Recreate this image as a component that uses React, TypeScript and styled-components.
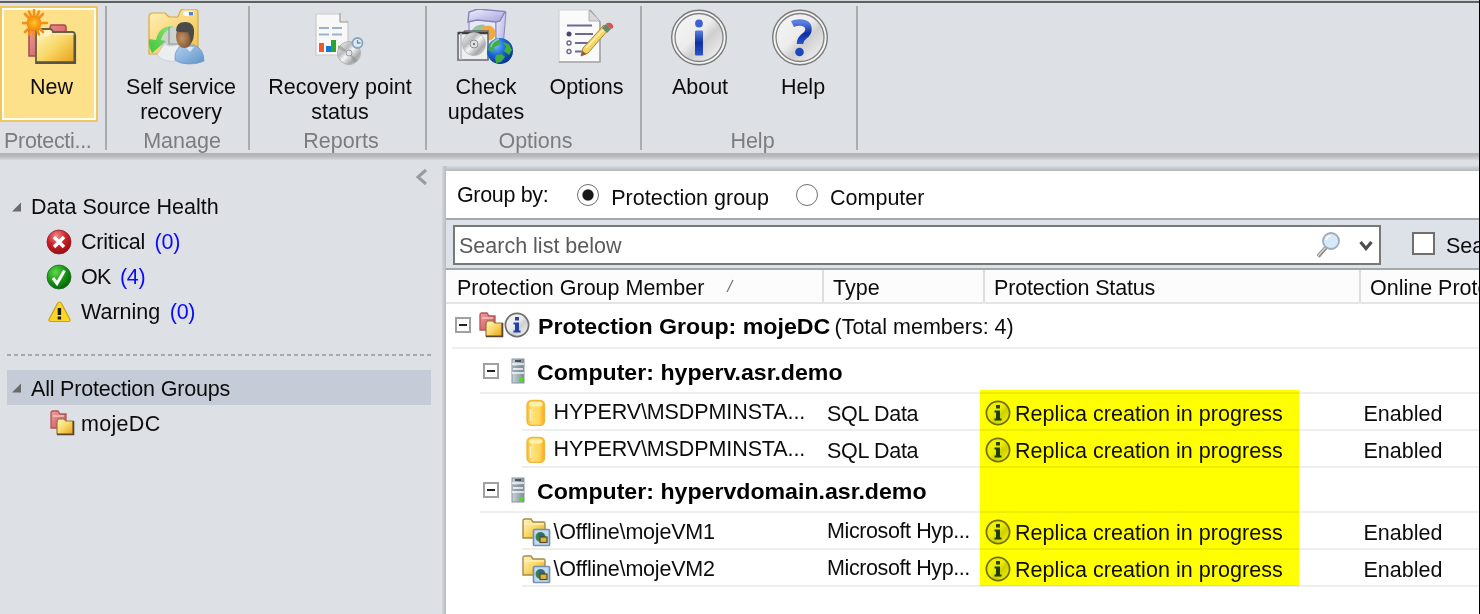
import React from "react";
import styled, { createGlobalStyle } from "styled-components";

const Global = createGlobalStyle`
  * { box-sizing: border-box; }
  body { margin: 0; background: #dde1e6; overflow: hidden; }
  svg { display: block; flex: none; }
`;

const Window = styled.div`
  width: 1480px;
  height: 614px;
  overflow: hidden;
  display: flex;
  flex-direction: column;
  background: #dde1e6;
  border-right: 1px solid #000;
  font-family: "Liberation Sans", Arial, sans-serif;
  font-size: 21.5px;
  line-height: 25px;
  color: #0c0c0c;
  white-space: nowrap;
`;

const Label = styled.span<{ $ls?: number; $color?: string }>`
  letter-spacing: ${(p) => p.$ls ?? 0}px;
  color: ${(p) => p.$color ?? "inherit"};
`;

/* ---------- ribbon ---------- */

const Ribbon = styled.div`
  height: 160px;
  flex: none;
  display: flex;
  border-top: 1px solid #d3d6da;
  background: linear-gradient(#5d615f 0 2px, #dde1e6 2px 152px, #b0b1b2 152px, #b6b8ba 155px, #d5d9dd 159px);
  background-origin: padding-box;
  padding-top: 5px;
`;

const RibbonGroup = styled.div<{ $width: number }>`
  width: ${(p) => p.$width}px;
  height: 144px;
  border-right: 2px solid #a9abad;
  display: flex;
  flex-direction: column;
`;

const RibbonButtons = styled.div<{ $pad?: number }>`
  height: 117px;
  display: flex;
  padding-left: ${(p) => p.$pad ?? 0}px;
`;

const RibbonButton = styled.div<{ $width: number; $active?: boolean; $nudge?: number }>`
  width: ${(p) => p.$width}px;
  height: 116px;
  padding-top: 3px;
  padding-left: ${(p) => p.$nudge ?? 0}px;
  display: flex;
  flex-direction: column;
  align-items: center;
  text-align: center;
  background: ${(p) => (p.$active ? "#fce08a" : "transparent")};
  box-shadow: ${(p) => (p.$active ? "inset 0 0 0 2px #f0c75e, inset 0 0 0 4px #fffdf3" : "none")};
`;

const IconSlot = styled.div<{ $pull?: number }>`
  height: 66px;
  width: 60px;
  margin-right: ${(p) => p.$pull ?? 0}px;
  flex: none;
`;

const GroupLabel = styled.div<{ $nudge?: number }>`
  margin-top: 7px;
  padding-left: ${(p) => p.$nudge ?? 0}px;
  text-align: center;
  color: #7b7c7e;
`;

const LeftGroupLabel = styled(GroupLabel)`
  padding-left: 4px;
  text-align: left;
  letter-spacing: -0.3px;
`;

/* ---------- sidebar ---------- */

const Content = styled.div`
  flex: 1;
  display: flex;
  min-height: 0;
`;

const Sidebar = styled.div`
  width: 442px;
  flex: none;
  padding: 8px 11px 0 7px;
`;

const CollapseRow = styled.div`
  height: 22px;
  display: flex;
  justify-content: flex-end;
  padding-right: 2px;
`;

const TreeRow = styled.div<{ $selected?: boolean; $drop?: number }>`
  height: 35px;
  display: flex;
  align-items: center;
  padding-left: 5px;
  padding-top: ${(p) => p.$drop ?? 0}px;
  background: ${(p) => (p.$selected ? "#c5ccd8" : "transparent")};
`;

const TreeArrow = styled.div`
  width: 19px;
  padding-bottom: 2px;
`;

const TreeLeaf = styled(TreeRow)`
  padding-left: 39px;
`;

const LeafIcon = styled.div<{ $inset?: number }>`
  width: 35px;
  flex: none;
  padding: 0 0 2px ${(p) => p.$inset ?? 0}px;
`;

const Count = styled.span`
  margin-left: 9.5px;
  letter-spacing: -0.3px;
  color: #0a0aff;
`;

const Divider = styled.div`
  margin: 24px 0 14px;
  height: 2px;
  background: repeating-linear-gradient(90deg, #a8abae 0 4px, transparent 4px 7px);
`;

/* ---------- main pane ---------- */

const PaneEdge = styled.div`
  width: 4px;
  flex: none;
  margin-top: 6px;
  background: linear-gradient(90deg, #d3d7dc, #b6bbc1);
`;

const Main = styled.div`
  flex: 1;
  min-width: 0;
  margin-top: 6px;
  background: linear-gradient(#d3d7dc, #b4b9bd 5px, #fff 5px);
  padding-top: 5px;
  display: flex;
  flex-direction: column;
  overflow: hidden;
`;

const GroupBar = styled.div`
  height: 47px;
  flex: none;
  display: flex;
  padding: 12px 0 0 11px;
`;

const RadioOption = styled.div<{ $left: number }>`
  display: flex;
  margin-left: ${(p) => p.$left}px;
`;

const RadioDot = styled.span<{ $checked?: boolean }>`
  width: 22px;
  height: 22px;
  margin: 1px 12px 0 0;
  border-radius: 50%;
  border: 1.8px solid #707070;
  background: ${(p) => (p.$checked ? "radial-gradient(circle, #171717 0 5px, #fff 6.2px)" : "#fff")};
`;

const RadioText = styled.span`
  padding-top: 3px;
`;

const SearchBar = styled.div`
  height: 52px;
  flex: none;
  border-top: 2px solid #a5a7aa;
  border-bottom: 2px solid #a5a7aa;
  background: #dde1e8;
  display: flex;
  align-items: flex-start;
  padding: 5px 0 0 7px;
`;

const SearchInput = styled.div`
  width: 928px;
  height: 40px;
  flex: none;
  border: 2px solid #787878;
  background: #fff;
  display: flex;
  align-items: flex-start;
  padding: 6px 6px 0 4px;
  color: #5a5a5a;
`;

const SearchText = styled.span`
  flex: 1;
  padding-top: 1px;
`;

const CheckBox = styled.span`
  width: 23px;
  height: 23px;
  flex: none;
  margin: 7px 11px 0 31px;
  border: 2px solid #6f6f6f;
  background: #fff;
`;

const CheckText = styled.span`
  margin-top: 9px;
`;

const HeaderRow = styled.div`
  height: 34px;
  flex: none;
  display: flex;
  background: #fcfcfc;
  border-bottom: 2px solid #e5e5e5;
`;

const HeaderCell = styled.div<{ $width: number; $pad: number; $ls?: number }>`
  width: ${(p) => p.$width}px;
  flex: none;
  padding: 6px 0 0 ${(p) => p.$pad}px;
  letter-spacing: ${(p) => p.$ls ?? 0}px;
  border-right: 2px solid #dedede;
  display: flex;
`;

const SortMark = styled.svg`
  margin: 3px 0 0 22px;
`;

const Body = styled.div`
  position: relative;
  flex: 1;
`;

const Highlight = styled.div`
  position: absolute;
  left: 534px;
  top: 86px;
  width: 319px;
  height: 196px;
  background: #ffff00;
  mix-blend-mode: multiply;
`;

const Row = styled.div<{ $indent: number; $height: number }>`
  margin-left: ${(p) => p.$indent}px;
  height: ${(p) => p.$height}px;
  border-bottom: 2px solid #eeeeee;
  display: flex;
`;

const GroupCell = styled.div<{ $gap: number; $top: number }>`
  display: flex;
  padding-left: 3px;
  padding-top: ${(p) => p.$top}px;
  gap: ${(p) => p.$gap}px;
`;

const MinusBox = styled.span`
  width: 16px;
  height: 16px;
  margin-top: 5px;
  flex: none;
  border: 2px solid #a0a0a0;
  background: linear-gradient(#222, #222) center / 8px 2px no-repeat #fff;
`;

const IconPair = styled.div`
  display: flex;
`;

const GroupTitle = styled.div`
  display: flex;
  padding-top: 3px;
`;

const Bold = styled.span<{ $width: number }>`
  width: ${(p) => p.$width}px;
  font-weight: bold;
  color: #000;
`;

const Stretch = styled.span<{ $x: number }>`
  display: inline-block;
  transform: scaleX(${(p) => p.$x});
  transform-origin: left;
`;

const MemberCell = styled.div<{ $top: number }>`
  width: 302px;
  flex: none;
  display: flex;
  padding-top: ${(p) => p.$top}px;
`;

const MemberIcon = styled.div`
  width: 31.5px;
  height: 30px;
  flex: none;
`;

const Cell = styled.div<{ $width: number; $pad: number; $top: number }>`
  width: ${(p) => p.$width}px;
  flex: none;
  display: flex;
  padding: ${(p) => p.$top}px 0 0 ${(p) => p.$pad}px;
`;

const StatusIcon = styled.div`
  width: 30px;
  margin-top: -2px;
`;

/* ---------- drawings ---------- */

const Defs = () => (
  <svg width="0" height="0" style={{ position: "absolute" }}>
    <defs>
      <linearGradient id="gold" x1="0" y1="0" x2="1" y2="1">
        <stop offset="0" stopColor="#fff6c4" />
        <stop offset=".5" stopColor="#f9d868" />
        <stop offset="1" stopColor="#e69f12" />
      </linearGradient>
      <linearGradient id="paleGold" x1="0" y1="0" x2="1" y2="1">
        <stop offset="0" stopColor="#fff0b8" />
        <stop offset="1" stopColor="#f2bf45" />
      </linearGradient>
      <linearGradient id="rose" x1="0" y1="0" x2="1" y2="1">
        <stop offset="0" stopColor="#f0a0a0" />
        <stop offset="1" stopColor="#c9494f" />
      </linearGradient>
      <linearGradient id="silver" x1="0" y1="0" x2="1" y2="1">
        <stop offset="0" stopColor="#f6f6f6" />
        <stop offset=".45" stopColor="#ececec" />
        <stop offset=".6" stopColor="#cfcfcf" />
        <stop offset="1" stopColor="#fafafa" />
      </linearGradient>
      <linearGradient id="blue" x1="0" y1="0" x2="0" y2="1">
        <stop offset="0" stopColor="#5a7fe0" />
        <stop offset=".5" stopColor="#0e2fa0" />
        <stop offset="1" stopColor="#2c55cf" />
      </linearGradient>
      <radialGradient id="sun">
        <stop offset="0" stopColor="#ffc933" />
        <stop offset=".6" stopColor="#fb9c12" />
        <stop offset="1" stopColor="#f58a12" />
      </radialGradient>
      <radialGradient id="red" cx=".4" cy=".25" r=".8">
        <stop offset="0" stopColor="#f08a8a" />
        <stop offset=".5" stopColor="#cc2027" />
        <stop offset="1" stopColor="#8f0d12" />
      </radialGradient>
      <radialGradient id="green" cx=".35" cy=".3" r=".8">
        <stop offset="0" stopColor="#5fd84a" />
        <stop offset=".55" stopColor="#149312" />
        <stop offset="1" stopColor="#04590a" />
      </radialGradient>
      <radialGradient id="globe" cx=".35" cy=".3" r=".8">
        <stop offset="0" stopColor="#6fb8ff" />
        <stop offset=".5" stopColor="#1560cf" />
        <stop offset="1" stopColor="#062a80" />
      </radialGradient>
      <linearGradient id="arrow" x1="1" y1="0" x2="0" y2="1">
        <stop offset="0" stopColor="#8be47a" />
        <stop offset="1" stopColor="#3fc53a" />
      </linearGradient>
      <linearGradient id="shirt" x1="0" y1="0" x2="1" y2="1">
        <stop offset="0" stopColor="#b5d2ef" />
        <stop offset="1" stopColor="#5e92c8" />
      </linearGradient>
      <radialGradient id="face" cx=".35" cy=".6" r=".7">
        <stop offset="0" stopColor="#c39062" />
        <stop offset="1" stopColor="#6b4326" />
      </radialGradient>
      <linearGradient id="disc" x1="0" y1="0" x2="1" y2="1">
        <stop offset="0" stopColor="#fff" />
        <stop offset=".35" stopColor="#b9babb" />
        <stop offset=".5" stopColor="#f7f7f7" />
        <stop offset=".75" stopColor="#a5a6a7" />
        <stop offset="1" stopColor="#eee" />
      </linearGradient>
      <linearGradient id="db" x1="0" y1="0" x2="1" y2="0">
        <stop offset="0" stopColor="#fbb62a" />
        <stop offset=".3" stopColor="#ffe27a" />
        <stop offset=".7" stopColor="#ffd75c" />
        <stop offset="1" stopColor="#fba91c" />
      </linearGradient>
      <linearGradient id="box" x1="0" y1="0" x2="1" y2="1">
        <stop offset="0" stopColor="#f1f0ff" />
        <stop offset="1" stopColor="#a3a3da" />
      </linearGradient>
      <linearGradient id="server" x1="0" y1="0" x2="1" y2="0">
        <stop offset="0" stopColor="#cbd5da" />
        <stop offset="1" stopColor="#7d8e99" />
      </linearGradient>
    </defs>
  </svg>
);

const NewIcon = () => (
  <svg width="60" height="60" viewBox="0 0 60 60">
    <path d="M7 21h20l2-5h13q2 0 2 3v28H7z" fill="url(#rose)" stroke="#a8494b" strokeWidth="1.5" />
    <path d="M14 54V23q0-3 3-3h11q2 0 3 3h19q3 0 3 3v28z" fill="url(#gold)" stroke="#6a5d42" strokeWidth="1.8" />
    <path d="M15.500 30v-6q0-2.500 3-2.500h9q2.500 0 2 2.500l-3 3.500h-8z" fill="#fff3c2" />
    <path d="M31 25h20" stroke="#fbe9a0" strokeWidth="2" />
    <path d="M52.800 26v27.500H14" fill="none" stroke="#57534a" strokeWidth="2.600" />
    <g stroke="#f59016" strokeWidth="2.600" strokeLinecap="round">
      <path d="M12 1v26M-1 14h26M3 5l18 18M21 5L3 23M7 2.500l10 23M17 2.500l-10 23" />
    </g>
    <circle cx="12" cy="14" r="7.500" fill="url(#sun)" />
  </svg>
);

const RecoveryIcon = () => (
  <svg width="60" height="60" viewBox="0 0 60 60">
    <path d="M4 8q0-4 4-4h12l4 4h9l2-5q1-3 4-3h10q4 0 4 4v41H4z" fill="url(#paleGold)" stroke="#dba83c" strokeWidth="1.2" />
    <rect x="38" y="2.500" width="11" height="4.500" rx="2" fill="#fff" />
    <rect x="44" y="3" width="4" height="3.500" fill="#4d83d2" />
    <path d="M24 18h14v26H18l-4-10z" fill="#c9d1d6" opacity=".9" />
    <path d="M12 46q7 8 20 6l2-17q-12 4-14-1z" fill="#eceef0" stroke="#c5cacf" strokeWidth=".8" />
    <path d="M29 17q-15-1-18 14l-7-1q-1 6 3 14l14-12-5-1q2-8 10-12z" fill="url(#arrow)" />
    <path d="M24 18v17h10" fill="none" stroke="#8799a5" strokeWidth="1.2" />
    <path d="M30 51q-1-13 10-15h9q10 4 10 16-6 3-15 3t-14-4z" fill="url(#shirt)" stroke="#6f99c5" strokeWidth=".8" />
    <path d="M40 38l5 5 4-5z" fill="#d7e6f5" />
    <ellipse cx="39.500" cy="27" rx="8.500" ry="12" fill="url(#face)" />
    <path d="M31 22q0-9 9-9 10 0 9 12 0 5-3 9-1-7-3-11-7 1-12-1z" fill="#4b4a49" />
  </svg>
);

const ReportIcon = () => (
  <svg width="60" height="60" viewBox="0 0 60 60">
    <path d="M6 5h24l8 8v33H6z" fill="#f8f8f8" stroke="#c9cacb" strokeWidth="1.2" />
    <path d="M30 4v9h8" fill="#e3e3e3" stroke="#8f9091" strokeWidth="1" />
    <path d="M9 19h10m3 0h10M9 25.500h10m3 0h10" stroke="#9db1cd" strokeWidth="2" />
    <rect x="9" y="34" width="5" height="9" fill="#f2582c" />
    <rect x="16" y="37" width="5" height="6" fill="#1477dd" />
    <rect x="21" y="31" width="5" height="12" fill="#2ba52d" />
    <path d="M28 36v6h4z" fill="#5ac53c" />
    <circle cx="39" cy="44" r="11.500" fill="url(#disc)" stroke="#b3b4b5" strokeWidth="1" />
    <path d="M39 44L28 40l2-4zM39 44l5 10 4-3z" fill="#8e8f90" opacity=".55" />
    <circle cx="39" cy="44" r="3" fill="#e4e4e4" stroke="#9c9c9c" />
    <circle cx="47.500" cy="34" r="5" fill="#dcecf8" stroke="#8ba4b7" strokeWidth="1.8" />
    <path d="M47.500 31v3h3" stroke="#6b8ca6" strokeWidth="1.3" fill="none" />
  </svg>
);

const UpdatesIcon = () => (
  <svg width="60" height="60" viewBox="0 0 60 60">
    <path d="M15 9l27 3v33l-27-3z" fill="#e9e8fb" stroke="#8f8fc0" strokeWidth="1.200" />
    <path d="M42 12l10-9-3 35-7 7z" fill="url(#box)" stroke="#8888ba" strokeWidth="1" />
    <path d="M14 13l1-10 9-3 27 2.500-5 9.500-4 1-19-2z" fill="url(#box)" stroke="#8585b8" strokeWidth="1.400" />
    <path d="M17 22q6-8 14-6l-2 8z" fill="#8cc7a0" />
    <circle cx="34" cy="24" r="7.500" fill="#f3a93d" />
    <path d="M4 24h5l2-2h23v29H4z" fill="#eeeef1" stroke="#6a6a70" strokeWidth="1.6" />
    <path d="M4 24h30" stroke="#3f3f45" strokeWidth="2.500" />
    <path d="M7 24v27" stroke="#b9b9bf" strokeWidth="1.500" />
    <circle cx="20" cy="35" r="11.500" fill="url(#disc)" stroke="#b5b5b9" strokeWidth=".8" />
    <circle cx="20" cy="35" r="4" fill="#e3e3e6" stroke="#8e8e92" strokeWidth="1" />
    <circle cx="20" cy="35" r="1.200" fill="#777" />
    <circle cx="46" cy="42" r="13" fill="url(#globe)" />
    <path d="M36 35q5-5 10-4l-1 5-5 2-1 5-5-2zM49 33l6 2 3 6-3 5-5-4 2-4zM42 46l6-1 3 3-4 5-5 1-1-5z" fill="#3fae3c" />
    <path d="M37 38q1-6 8-8" stroke="#a9dbff" strokeWidth="1.500" fill="none" opacity=".7" />
  </svg>
);

const OptionsIcon = () => (
  <svg width="60" height="60" viewBox="0 0 60 60">
    <path d="M2 1h31l10 12v40H2z" fill="#fafafa" stroke="#d2d3d5" strokeWidth="1.2" />
    <path d="M33 1l10 12v40H2" fill="none" stroke="#a2a4a6" strokeWidth="1.6" />
    <path d="M32 1v11h11z" fill="#d8d9da" stroke="#aeb0b2" strokeWidth="1" />
    <path d="M10 16.500h25M18 25h18M18 34h15M18 42.500h13" stroke="#6d6a92" strokeWidth="1.800" />
    <circle cx="12" cy="25" r="2.500" fill="#4a4872" />
    <circle cx="12" cy="34" r="2" fill="#fff" stroke="#6d6a92" strokeWidth="1.400" />
    <circle cx="12" cy="42.500" r="2" fill="#fff" stroke="#6d6a92" strokeWidth="1.400" />
    <path d="M24 47l2-8 21-23 5 4-21 24z" fill="#f6d565" stroke="#ab8435" strokeWidth="1" />
    <path d="M29 39l19-20" stroke="#fff1ac" strokeWidth="1.800" />
    <path d="M24 47l1.500-5 4 3z" fill="#8a5a33" />
    <path d="M45 19l4-4 5 5-4 4z" fill="#5f8b68" />
    <path d="M49 15l1-1q3-1 5 1t1 4l-2 1z" fill="#d9534f" />
  </svg>
);

const Disc = ({ children }: { children: React.ReactNode }) => (
  <svg width="60" height="60" viewBox="1 0 60 60">
    <circle cx="30" cy="28.500" r="27.300" fill="#f4f5f5" stroke="#7a7a7a" strokeWidth="1.400" />
    <circle cx="30" cy="28.500" r="24" fill="url(#silver)" stroke="#808080" strokeWidth="1.300" />
    {children}
  </svg>
);

const AboutIcon = () => (
  <Disc>
    <circle cx="30" cy="14.500" r="3.900" fill="#3c62d2" />
    <rect x="26" y="21.500" width="8" height="25" rx="1" fill="url(#blue)" />
  </Disc>
);

const HelpIcon = () => (
  <Disc>
    <path d="M22.500 15q3-1.500 7-1.500 9 0 9 7 0 3.500-4 6.500-4.500 3-4.500 8" fill="none" stroke="url(#blue)" strokeWidth="6.500" />
    <circle cx="29.500" cy="43" r="4.300" fill="#1f46bd" />
  </Disc>
);

const InfoIcon = () => (
  <svg width="26" height="26" viewBox="0 0 26 26">
    <circle cx="13" cy="13" r="11.600" fill="url(#silver)" stroke="#6e6e6e" strokeWidth="1.700" />
    <rect x="11" y="5" width="4" height="3.500" fill="#2745b0" />
    <path d="M9.500 10.500H15v8h1.500v2h-7v-2H11v-6H9.500z" fill="#1f3fae" />
  </svg>
);

const FoldersIcon = () => (
  <svg width="25" height="26" viewBox="0 0 25 26">
    <path d="M1 3q0-2 2-2h5l2 3h6v14H1z" fill="url(#rose)" stroke="#b25558" strokeWidth="1.300" />
    <path d="M3 6h11" stroke="#f7c4c4" strokeWidth="1.500" />
    <path d="M7 13q0-4 2-4h5l2 2h7v13H7z" fill="url(#gold)" stroke="#94733a" strokeWidth="1.200" />
    <path d="M23.500 11v13.500H7" fill="none" stroke="#54452c" strokeWidth="1.600" />
  </svg>
);

const ServerIcon = () => (
  <svg width="14" height="26" viewBox="0 0 14 26">
    <rect x="1" y="1" width="12" height="24" fill="url(#server)" stroke="#87949c" strokeWidth="1" />
    <path d="M4 3h6" stroke="#333" strokeWidth="1.500" />
    <path d="M1 6h12M2 11h10M1 15h12" stroke="#f1f5f7" strokeWidth="1.500" />
    <path d="M2 9h10M2 13h10" stroke="#76858f" strokeWidth="1" />
    <rect x="8.500" y="20" width="3.500" height="3.500" fill="#4fe01c" />
  </svg>
);

const DatabaseIcon = () => (
  <svg width="28" height="28" viewBox="0 0 28 28">
    <rect x="5" y="2.500" width="17.500" height="25" rx="4.500" fill="url(#db)" stroke="#f4b43c" strokeWidth="1.300" />
    <rect x="7" y="4" width="13.500" height="4.500" rx="2.200" fill="#fff0a8" />
    <path d="M8.500 11v12" stroke="#fff5c4" strokeWidth="1.600" />
  </svg>
);

const VmIcon = () => (
  <svg width="30" height="30" viewBox="0 0 30 30">
    <path d="M1 4q0-2 2-2h6l2 3h11q1 0 1 2v14H1z" fill="url(#gold)" stroke="#a58a4c" strokeWidth="1.400" />
    <path d="M2 7h20" stroke="#fff3bd" strokeWidth="1.400" />
    <rect x="11.500" y="12.500" width="16" height="16" rx="1" fill="#c3dbf2" stroke="#7590b0" strokeWidth="1.700" />
    <circle cx="18.500" cy="20" r="5" fill="#3c7f55" />
    <path d="M16 16h5l2 4h-6z" fill="#2d6b78" />
    <rect x="18" y="20" width="7" height="5.500" fill="#e2b13c" stroke="#4d4a2a" strokeWidth="1.200" />
  </svg>
);

const CriticalIcon = () => (
  <svg width="26" height="26" viewBox="0 0 26 26">
    <circle cx="13" cy="13" r="12" fill="url(#red)" stroke="#8f2024" strokeWidth=".8" />
    <path d="M8 8l10 10m0-10l-10 10" stroke="#fff" strokeWidth="3.600" />
  </svg>
);

const OkIcon = () => (
  <svg width="26" height="26" viewBox="0 0 26 26">
    <circle cx="13" cy="13" r="12" fill="url(#green)" stroke="#236b22" strokeWidth=".8" />
    <path d="M7 14l4 5.500 7.500-13" fill="none" stroke="#fff" strokeWidth="3" />
  </svg>
);

const WarningIcon = () => (
  <svg width="26" height="26" viewBox="0 0 26 26">
    <path d="M13.500 3q1.200 0 2 1.500l8.500 16q.5 2-1.500 2H4.500q-2 0-1.500-2l8.500-16q.8-1.500 2-1.500z" fill="#fbd723" stroke="#c79f1c" strokeWidth="1.200" />
    <rect x="11.700" y="9" width="3.400" height="7" fill="#1a1a1a" />
    <rect x="11.700" y="17.500" width="3.400" height="3" fill="#1a1a1a" />
  </svg>
);

const Triangle = () => (
  <svg width="10" height="10" viewBox="0 0 10 10">
    <path d="M9 .5v9H0z" fill="#6a6a6a" />
  </svg>
);

const CollapseIcon = () => (
  <svg width="14" height="18" viewBox="0 0 14 18">
    <path d="M11 2L3 9l8 7" fill="none" stroke="#999b9d" strokeWidth="3" />
  </svg>
);

const Magnifier = styled.svg`
  margin: -2px 18px 0 0;
`;

const ChevronSvg = styled.svg`
  margin: 7px 0 0 0;
`;

/* ---------- page ---------- */

type Member = { name: string; type: string; vm?: boolean; nameLs: number; typeLs: number };

const sql: Member = { name: "HYPERV\\MSDPMINSTA...", type: "SQL Data", nameLs: -0.1, typeLs: -0.3 };
const vm = (n: number): Member => ({
  name: `\\Offline\\mojeVM${n}`,
  type: "Microsoft Hyp...",
  vm: true,
  nameLs: -0.2,
  typeLs: -0.4,
});

const MemberRow = ({ m }: { m: Member }) => (
  <Row $indent={76} $height={37}>
    <MemberCell $top={4}>
      <MemberIcon>{m.vm ? <VmIcon /> : <DatabaseIcon />}</MemberIcon>
      <Cell $width={268} $pad={0} $top={m.vm ? 3 : 2}>
        <Label $ls={m.nameLs}>{m.name}</Label>
      </Cell>
    </MemberCell>
    <Cell $width={161} $pad={3} $top={m.vm ? 6 : 8}>
      <Label $ls={m.typeLs}>{m.type}</Label>
    </Cell>
    <Cell $width={376} $pad={0} $top={8}>
      <StatusIcon>
        <InfoIcon />
      </StatusIcon>
      <Label $ls={0.05}>Replica creation in progress</Label>
    </Cell>
    <Cell $width={110} $pad={2.5} $top={8}>
      <Label>Enabled</Label>
    </Cell>
  </Row>
);

const ComputerRow = ({ name, width }: { name: string; width: number }) => (
  <Row $indent={34} $height={45}>
    <GroupCell $gap={12} $top={9}>
      <MinusBox />
      <ServerIcon />
      <GroupTitle>
        <Bold $width={width}>
          <Stretch $x={1.076}>Computer: {name}</Stretch>
        </Bold>
      </GroupTitle>
    </GroupCell>
  </Row>
);

export default function App() {
  return (
    <Window>
      <Global />
      <Defs />
      <Ribbon>
        <RibbonGroup $width={107}>
          <RibbonButtons>
            <RibbonButton $width={98} $active $nudge={5}>
              <IconSlot><NewIcon /></IconSlot>
              <Label>New</Label>
            </RibbonButton>
          </RibbonButtons>
          <LeftGroupLabel>Protecti...</LeftGroupLabel>
        </RibbonGroup>
        <RibbonGroup $width={143}>
          <RibbonButtons>
            <RibbonButton $width={141} $nudge={7}>
              <IconSlot $pull={13}><RecoveryIcon /></IconSlot>
              <Label $ls={-0.1}>Self service<br />recovery</Label>
            </RibbonButton>
          </RibbonButtons>
          <GroupLabel $nudge={9}>Manage</GroupLabel>
        </RibbonGroup>
        <RibbonGroup $width={177}>
          <RibbonButtons>
            <RibbonButton $width={175} $nudge={5}>
              <IconSlot><ReportIcon /></IconSlot>
              <Label>Recovery point<br />status</Label>
            </RibbonButton>
          </RibbonButtons>
          <GroupLabel $nudge={7}>Reports</GroupLabel>
        </RibbonGroup>
        <RibbonGroup $width={215}>
          <RibbonButtons $pad={9}>
            <RibbonButton $width={100}>
              <IconSlot $pull={4}><UpdatesIcon /></IconSlot>
              <Label>Check<br />updates</Label>
            </RibbonButton>
            <RibbonButton $width={101}>
              <IconSlot><OptionsIcon /></IconSlot>
              <Label>Options</Label>
            </RibbonButton>
          </RibbonButtons>
          <GroupLabel $nudge={4}>Options</GroupLabel>
        </RibbonGroup>
        <RibbonGroup $width={216}>
          <RibbonButtons $pad={8}>
            <RibbonButton $width={100}>
              <IconSlot><AboutIcon /></IconSlot>
              <Label>About</Label>
            </RibbonButton>
            <RibbonButton $width={106}>
              <IconSlot $pull={5}><HelpIcon /></IconSlot>
              <Label>Help</Label>
            </RibbonButton>
          </RibbonButtons>
          <GroupLabel $nudge={7}>Help</GroupLabel>
        </RibbonGroup>
      </Ribbon>

      <Content>
        <Sidebar>
          <CollapseRow><CollapseIcon /></CollapseRow>
          <TreeRow>
            <TreeArrow><Triangle /></TreeArrow>
            <Label>Data Source Health</Label>
          </TreeRow>
          <TreeLeaf>
            <LeafIcon><CriticalIcon /></LeafIcon>
            <Label $ls={-0.2}>Critical</Label>
            <Count>(0)</Count>
          </TreeLeaf>
          <TreeLeaf>
            <LeafIcon><OkIcon /></LeafIcon>
            <Label $ls={-0.8}>OK</Label>
            <Count>(4)</Count>
          </TreeLeaf>
          <TreeLeaf>
            <LeafIcon><WarningIcon /></LeafIcon>
            <Label>Warning</Label>
            <Count>(0)</Count>
          </TreeLeaf>
          <Divider />
          <TreeRow $selected $drop={3}>
            <TreeArrow><Triangle /></TreeArrow>
            <Label $ls={-0.2}>All Protection Groups</Label>
          </TreeRow>
          <TreeLeaf $drop={3}>
            <LeafIcon $inset={4}><FoldersIcon /></LeafIcon>
            <Label $ls={0.3}>mojeDC</Label>
          </TreeLeaf>
        </Sidebar>

        <PaneEdge />
        <Main>
          <GroupBar>
            <Label $ls={-0.35}>Group by:</Label>
            <RadioOption $left={29}>
              <RadioDot $checked />
              <RadioText>Protection group</RadioText>
            </RadioOption>
            <RadioOption $left={27}>
              <RadioDot />
              <RadioText>Computer</RadioText>
            </RadioOption>
          </GroupBar>
          <SearchBar>
            <SearchInput>
              <SearchText>Search list below</SearchText>
              <Magnifier width="25" height="28" viewBox="0 0 25 28">
                <path d="M2 25.500l8-9" stroke="#8c8c8c" strokeWidth="4" />
                <path d="M2 25l8-9" stroke="#d5d5d5" strokeWidth="1.400" />
                <circle cx="15" cy="10" r="8" fill="#d6e9fa" stroke="#9fabb6" strokeWidth="1.800" />
                <path d="M10 9q1-4 5-4" stroke="#fff" strokeWidth="1.600" fill="none" />
              </Magnifier>
              <ChevronSvg width="14" height="12" viewBox="0 0 14 12">
                <path d="M1.500 2L7 8.500 12.500 2" fill="none" stroke="#4e4e4e" strokeWidth="3.200" />
              </ChevronSvg>
            </SearchInput>
            <CheckBox />
            <CheckText>Sea</CheckText>
          </SearchBar>
          <HeaderRow>
            <HeaderCell $width={378} $pad={11}>
              Protection Group Member
              <SortMark width="8" height="14" viewBox="0 0 8 14">
                <path d="M1 13L7 1" stroke="#777" strokeWidth="1.200" />
              </SortMark>
            </HeaderCell>
            <HeaderCell $width={161} $pad={9}>Type</HeaderCell>
            <HeaderCell $width={376} $pad={9} $ls={-0.15}>Protection Status</HeaderCell>
            <HeaderCell $width={130} $pad={9}>Online Prote</HeaderCell>
          </HeaderRow>
          <Body>
            <Row $indent={6} $height={45}>
              <GroupCell $gap={8} $top={8}>
                <MinusBox />
                <IconPair>
                  <FoldersIcon />
                  <InfoIcon />
                </IconPair>
                <GroupTitle>
                  <Bold $width={296.5}>
                    <Stretch $x={1.078}>Protection Group: mojeDC</Stretch>
                  </Bold>
                  <Label>(Total members: 4)</Label>
                </GroupTitle>
              </GroupCell>
            </Row>
            <ComputerRow name="hyperv.asr.demo" width={320} />
            <MemberRow m={sql} />
            <MemberRow m={sql} />
            <ComputerRow name="hypervdomain.asr.demo" width={400} />
            <MemberRow m={vm(1)} />
            <MemberRow m={vm(2)} />
            <Highlight />
          </Body>
        </Main>
      </Content>
    </Window>
  );
}
